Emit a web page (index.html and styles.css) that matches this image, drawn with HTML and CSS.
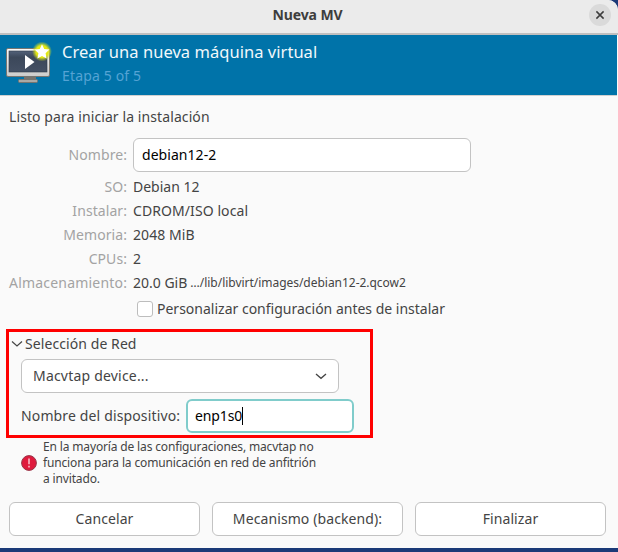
FILE: index.html
```html
<!DOCTYPE html>
<html lang="es">
<head>
<meta charset="utf-8">
<title>Nueva MV</title>
<link rel="stylesheet" href="styles.css">
</head>
<body>
<div class="window">
  <header class="titlebar">
    <h1 class="title">Nueva MV</h1>
    <button class="close" aria-label="Cerrar"><svg width="10" height="10" viewBox="0 0 10 10"><path d="M1.400 1.400 8.600 8.600M8.600 1.400 1.400 8.600" stroke="#3d3d3d" stroke-width="1.500"/></svg></button>
  </header>
  <section class="banner">
    <svg class="monitor" width="48" height="48" viewBox="0 0 48 48">
      <defs>
        <linearGradient id="bezel" x2="0" y2="1"><stop offset="0" stop-color="#fafafa"/><stop offset="1" stop-color="#cccccb"/></linearGradient>
        <linearGradient id="screen" x2="0" y2="1"><stop offset="0" stop-color="#53627a"/><stop offset=".3" stop-color="#3c485a"/><stop offset="1" stop-color="#445064"/></linearGradient>
        <radialGradient id="glow"><stop offset="0" stop-color="#f0f000"/><stop offset=".6" stop-color="#e2e715"/><stop offset="1" stop-color="#c3d72a" stop-opacity="0"/></radialGradient>
      </defs>
      <path d="M20 36h12v4H20z" fill="#77746e"/>
      <rect x="14.500" y="39.500" width="19" height="3" rx="1" fill="#aaa9a5" stroke="#767570"/>
      <rect x="2.500" y="8.500" width="43" height="28" rx="1.500" fill="url(#bezel)" stroke="#777671"/>
      <rect x="5" y="11" width="38" height="21" fill="url(#screen)" stroke="#303b49" stroke-width=".6"/>
      <path d="M21 15v14l9.500-7z" fill="#fff"/>
      <circle cx="38" cy="11.500" r="10" fill="url(#glow)"/>
      <path d="m38 4.200 2.200 4.700 5.200.7-3.800 3.600 1 5.200-4.600-2.500-4.600 2.500 1-5.200-3.800-3.600 5.200-.7z" fill="#fff"/>
    </svg>
    <div class="heading">
      <h2 class="task">Crear una nueva máquina virtual</h2>
      <p class="step">Etapa 5 of 5</p>
    </div>
  </section>
  <main class="content">
    <p class="ready">Listo para iniciar la instalación</p>
    <dl class="summary">
      <dt class="t-nombre">Nombre:</dt><dd class="entry name-entry">debian12-2</dd>
      <dt>SO:</dt><dd>Debian 12</dd>
      <dt>Instalar:</dt><dd class="wide">CDROM/ISO local</dd>
      <dt>Memoria:</dt><dd class="wide">2048 MiB</dd>
      <dt>CPUs:</dt><dd>2</dd>
      <dt class="t-alm">Almacenamiento:</dt><dd class="storage"><span>20.0 GiB</span><span class="path">…/lib/libvirt/images/debian12-2.qcow2</span></dd>
    </dl>
    <label class="customize"><span class="box"></span><span>Personalizar configuración antes de instalar</span></label>
    <section class="network">
      <div class="expander"><svg width="12" height="8" viewBox="0 0 12 8"><path d="m1 1.500 5 4.500 5-4.500" fill="none" stroke="#454545" stroke-width="1.200"/></svg><span>Selección de Red</span></div>
      <div class="entry combo"><span class="mode">Macvtap device...</span><svg width="12" height="8" viewBox="0 0 12 8"><path d="m1 2 5 4.300 5-4.300" fill="none" stroke="#454545" stroke-width="1.300"/></svg></div>
      <div class="device"><span class="device-label">Nombre del dispositivo:</span><div class="entry focused"><span class="device-name">enp1s0</span><i class="caret"></i></div></div>
    </section>
    <div class="warning">
      <svg width="16" height="16" viewBox="0 0 16 16"><circle cx="8" cy="8" r="7.400" fill="#df1b3d" stroke="#96384a"/><path d="M8 3.500v5.700M8 10.800v1.700" stroke="#f7bcc7" stroke-width="1.600"/></svg>
      <p>En la mayoría de las configuraciones, macvtap no<br>funciona para la comunicación en red de anfitrión<br>a invitado.</p>
    </div>
  </main>
  <footer class="actions">
    <button>Cancelar</button><button class="backend">Mecanismo (backend):</button><button>Finalizar</button>
  </footer>
</div>
</body>
</html>
```
FILE: styles.css
```css
* { box-sizing: border-box; }
body { margin: 0; height: 552px; overflow: hidden; background: #1b3a78; font: 14px/24px "Noto Sans", sans-serif; color: #444; }
h1, h2, p, dl, dd { margin: 0; }
.window { height: 548px; background: #fafafa; border-radius: 0 10px 0 0; overflow: hidden; display: flex; flex-direction: column; white-space: nowrap; }
.titlebar { height: 35px; flex: none; background: #ebebeb; border-bottom: 2px solid #bfbfbf; display: grid; grid-template-columns: 1fr auto 1fr; align-items: center; padding: 0 7px 3px 0; }
.title { grid-column: 2; font-size: 14px; line-height: 24px; font-weight: 700; margin-left: 4px; color: #3d3d3d; letter-spacing: -.1px; }
.close { justify-self: end; width: 22px; height: 22px; padding: 0; border: 0; border-radius: 50%; background: #dadada; display: grid; place-items: center; }
.banner { height: 61px; flex: none; background: #0073a9; border-bottom: 1px solid #d0d0d0; margin-right: 1px; display: flex; padding: 5px 0 0 4px; gap: 10px; }
.task { font-size: 16.5px; line-height: 24px; font-weight: 400; color: #f2f8fb; letter-spacing: .04px; }
.step { color: #55a3d4; letter-spacing: .15px; }
.content { padding: 9px 0 0 9px; flex: 1; }
.ready { letter-spacing: .09px; }
.summary { display: grid; grid-template-columns: 118px 1fr; column-gap: 6px; margin-top: 9px; }
dt { text-align: right; color: #a3a3a3; letter-spacing: .07px; }
.t-alm { letter-spacing: .2px; margin-right: -.2px; }
.wide { letter-spacing: .08px; }
.entry { height: 34px; border: 1px solid #c3c3c3; border-radius: 6px; background: #fff; display: flex; align-items: center; padding: 0 8px; }
.name-entry { width: 338px; margin-bottom: 3px; color: #000; letter-spacing: .05px; }
.t-nombre { padding-top: 5px; }
.storage { display: flex; gap: 3px; }
.path { font-size: 12px; letter-spacing: -.03px; }
.customize { display: flex; align-items: center; gap: 4px; margin: 2px 0 0 128px; }
.box { width: 16px; height: 16px; border: 1px solid #bdbdbd; border-radius: 3px; background: #fff; }
.network { width: 367px; height: 109px; margin: 8px 0 1px -3px; border: 3px solid #f00; padding: 0 0 0 2px; }
.expander { height: 27px; display: flex; align-items: center; gap: 2px; padding-bottom: 3px; letter-spacing: .08px; }
.combo { width: 318px; margin-left: 10px; padding: 0 11px; justify-content: space-between; }
.mode { letter-spacing: .2px; }
.device { display: flex; align-items: center; justify-content: space-between; width: 333px; margin: 6px 0 0 10px; }
.device-label { letter-spacing: .14px; }
.focused { width: 168px; border: 2px solid #80cccb; padding: 0 7px; color: #000; }
.device-name { letter-spacing: -.1px; }
.caret { width: 1px; height: 18px; background: #000; }
.warning { display: flex; align-items: center; gap: 6px; margin-left: 12px; font-size: 12px; line-height: 16px; letter-spacing: -.15px; }
.actions { display: flex; gap: 12px; padding: 0 12px 12px 9px; }
.actions button { width: 191px; height: 34px; padding: 0; font: inherit; color: inherit; background: #fff; border: 1px solid #c3c3c3; border-radius: 6px; letter-spacing: .1px; }
```
